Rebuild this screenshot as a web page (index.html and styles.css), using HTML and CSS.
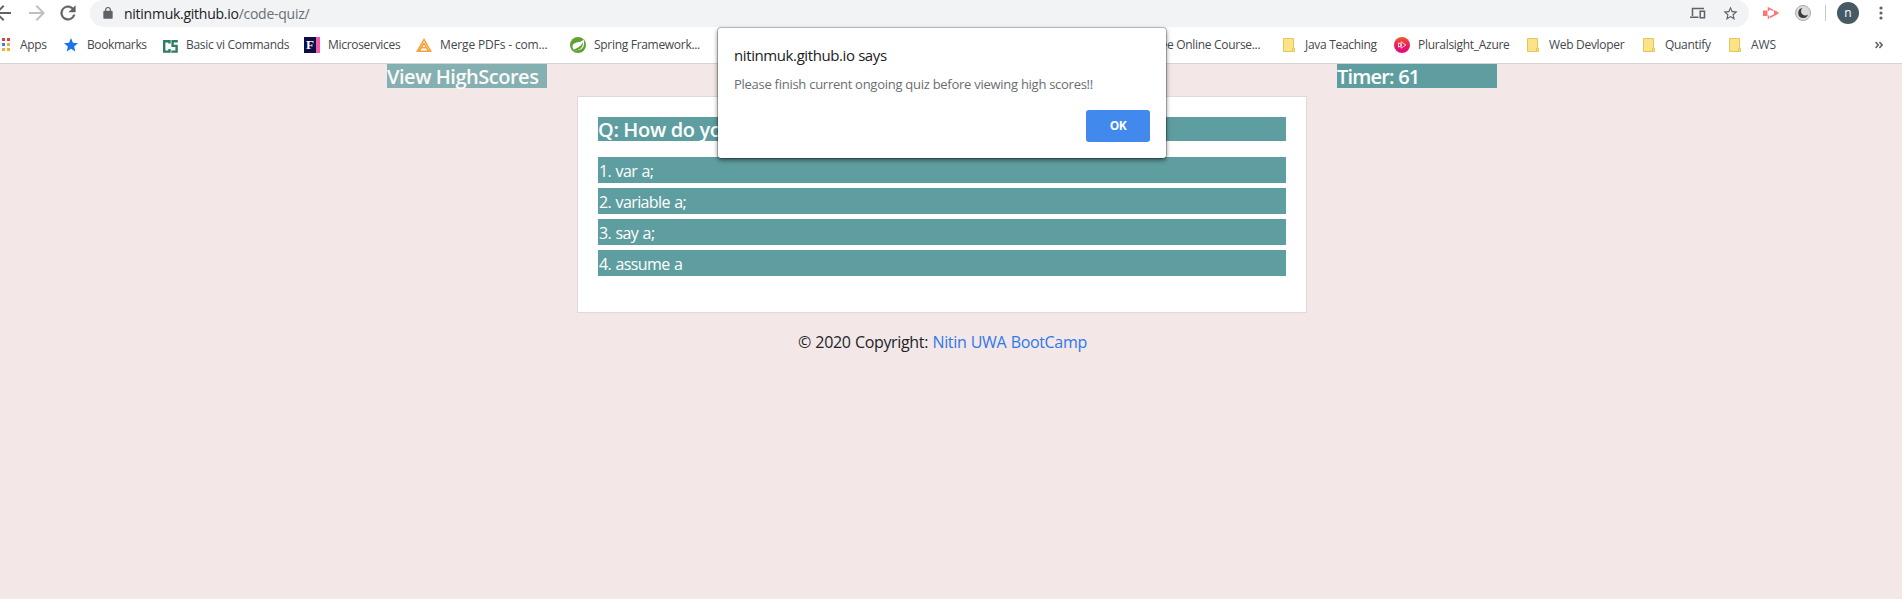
FILE: index.html
```html
<!DOCTYPE html>
<html lang="en">
<head>
<meta charset="utf-8">
<title>Code Quiz</title>
<link rel="stylesheet" href="styles.css">
</head>
<body>
<header class="browser">
  <div class="toolbar">
    <div class="nav">
      <svg width="24" height="24" viewBox="0 0 24 24"><path d="M20 11H7.830l5.590-5.590L12 4l-8 8 8 8 1.410-1.410L7.830 13H20z" fill="#5f6368"/></svg>
      <svg width="22" height="24" viewBox="1 0 22 24"><path d="M4 11h12.170l-5.590-5.590L12 4l8 8-8 8-1.410-1.410L16.170 13H4z" fill="#bdc0c3"/></svg>
      <svg class="reload" width="22" height="22" viewBox="0 0 24 24"><path d="M17.650 6.350A8 8 0 1 0 19.730 14h-2.080A6 6 0 1 1 12 6c1.660 0 3.140.69 4.220 1.780L13 11h7V4z" fill="#5f6368" stroke="#5f6368" stroke-width=".5"/></svg>
    </div>
    <div class="omnibox">
      <svg class="lock" width="14" height="14" viewBox="0 0 24 24"><path d="M18 8h-1V6.500a5 5 0 0 0-10 0V8H6a2 2 0 0 0-2 2v10a2 2 0 0 0 2 2h12a2 2 0 0 0 2-2V10a2 2 0 0 0-2-2zM9 8V6.500a3 3 0 0 1 6 0V8z" fill="#5f6368"/></svg>
      <span class="url">nitinmuk.github.io<span class="path">/code-quiz/</span></span>
      <svg class="devices" width="16" height="12" viewBox="0 0 16 12" fill="none" stroke="#5f6368" stroke-width="1.500"><path d="M2.500 9V1.500H14M0 10.200h8.500M10.200 4.200h4.300v6.600h-4.300z"/></svg>
      <svg class="fav" width="17" height="17" viewBox="0 0 24 24"><path d="M22 9.240l-7.190-.62L12 2 9.190 8.630 2 9.240l5.460 4.730L5.820 21 12 17.270 18.180 21l-1.630-7.030zM12 15.400l-3.760 2.270 1-4.280-3.320-2.880 4.380-.38L12 6.100l1.710 4.040 4.380.38-3.320 2.880 1 4.280z" fill="#5f6368"/></svg>
    </div>
    <div class="extensions">
      <svg class="ext-red" width="17" height="14" viewBox="0 0 17 14"><path d="M0 4.500h4.500v5.500H0z" fill="#f5797b"/><path d="M5.500 5V2l8.500 4.500M14 7.500L5.500 12V9.500" fill="none" stroke="#f5797b" stroke-width="1.600" stroke-dasharray="8 1"/><path d="M11 4.500L16.500 7 11 9.500z" fill="#f5797b"/></svg>
      <svg class="ext-moon" width="16" height="16" viewBox="0 0 16 16"><circle cx="8" cy="8" r="7.500" fill="#dcdcdc" stroke="#aaa"/><path d="M7.500 3A5 5 0 1 0 13 9.400 4 4 0 0 1 7.500 3z" fill="#3c3c3f"/></svg>
      <span class="divider"></span>
      <span class="avatar">n</span>
      <svg class="more" width="4" height="14" viewBox="0 0 4 14" fill="#5f6368"><circle cx="2" cy="2" r="1.600"/><circle cx="2" cy="7" r="1.600"/><circle cx="2" cy="12" r="1.600"/></svg>
    </div>
  </div>
  <nav class="bookmarks">
    <span class="bm"><svg width="16" height="16" viewBox="0 0 16 16"><path d="M1 1h3v3H1zM6 1h3v3H6zM11 1h3v3h-3z" fill="#d9453c"/><path d="M1 6h3v3H1z" fill="#32a050"/><path d="M6 6h3v3H6z" fill="#3b82e8"/><path d="M11 6h3v3h-3zM6 11h3v3H6zM11 11h3v3h-3z" fill="#eab02e"/></svg><span>Apps</span></span>
    <span class="bm"><svg class="star" width="14" height="14" viewBox="0 0 24 24"><path d="M12 18.300L19.400 23l-2-8.500L24 8.800l-8.700-.7L12 0 8.700 8.100 0 8.800l6.600 5.700-2 8.500z" fill="#1a73e8"/></svg><span class="tight">Bookmarks</span></span>
    <span class="bm"><svg width="16" height="16" viewBox="0 0 16 16" fill="none" stroke="#2f7d62" stroke-width="2.400"><path d="M7.500 6.500V4.200H2.200v10.400h5.300V12M15.800 4.200H10.600v4.700h4v5.700H9.300"/></svg><span>Basic vi Commands</span></span>
    <span class="bm"><span class="f-icon">F</span><span>Microservices</span></span>
    <span class="bm"><svg width="16" height="16" viewBox="0 0 16 16" fill="none" stroke="#f6a13a" stroke-width="1.500"><path d="M8 2.500L1.300 14.200h13.400zM8 6l-4.700 8M8 6l2.600 4.800H5.200M10.600 10.800l2 3.200"/></svg><span class="wide">Merge PDFs - com...</span></span>
    <span class="bm"><svg width="16" height="16" viewBox="0 0 16 16"><circle cx="8" cy="8" r="8" fill="#5fa135"/><path d="M13.500 2.300C12 5 9 5 6.500 5.500 3 6.300 1.700 9 3 11.500c.3.700 1 1.300 1.500 1.500 3 .7 7 .3 8.700-3 1.200-2.500 1-5.500.3-7.700z" fill="#fff"/><path d="M13 5c-1.500 3.500-4 5.500-9.500 7.700 3 .6 6.800.2 8.400-2.800C12.900 8.200 13 6.500 13 5z" fill="#5fa135"/></svg><span>Spring Framework...</span></span>
    <span class="bm course"><span>Free Online Course...</span></span>
    <span class="bm"><svg width="16" height="16" viewBox="0 0 16 16"><path d="M2.500 1.500h10v10h1v3h-11z" fill="#fde388" stroke="#e3c65c"/><path d="M11.500 14v-2.500h2" fill="none" stroke="#e3c65c"/></svg><span>Java Teaching</span></span>
    <span class="bm"><svg width="16" height="16" viewBox="0 0 16 16"><defs><linearGradient id="g" x1="0" y1="0" x2="0" y2="1"><stop offset="0" stop-color="#f05a28"/><stop offset=".6" stop-color="#e5195f"/><stop offset="1" stop-color="#e80a89"/></linearGradient></defs><circle cx="8" cy="8" r="8" fill="url(#g)"/><path d="M7 4.800v6.400L12 8zM4.500 5.800v4.400L8 8z" fill="none" stroke="#ffe3ec" stroke-width=".9"/></svg><span>Pluralsight_Azure</span></span>
    <span class="bm"><svg width="16" height="16" viewBox="0 0 16 16"><path d="M2.500 1.500h10v10h1v3h-11z" fill="#fde388" stroke="#e3c65c"/><path d="M11.500 14v-2.500h2" fill="none" stroke="#e3c65c"/></svg><span>Web Devloper</span></span>
    <span class="bm"><svg width="16" height="16" viewBox="0 0 16 16"><path d="M2.500 1.500h10v10h1v3h-11z" fill="#fde388" stroke="#e3c65c"/><path d="M11.500 14v-2.500h2" fill="none" stroke="#e3c65c"/></svg><span>Quantify</span></span>
    <span class="bm"><svg width="16" height="16" viewBox="0 0 16 16"><path d="M2.500 1.500h10v10h1v3h-11z" fill="#fde388" stroke="#e3c65c"/><path d="M11.500 14v-2.500h2" fill="none" stroke="#e3c65c"/></svg><span class="wide">AWS</span></span>
    <svg class="overflow" width="8" height="8" viewBox="0 0 8 8" fill="none" stroke="#5f6368" stroke-width="1.600"><path d="M.6 1l2.700 3L.6 7M4.400 1l2.700 3-2.700 3"/></svg>
  </nav>
</header>
<main class="page">
  <div class="status">
    <h5 class="tag scores">View HighScores</h5>
    <h5 class="tag timer">Timer: 61</h5>
  </div>
  <section class="card">
    <h5 class="question">Q: How do you</h5>
    <div class="option">1. var a;</div>
    <div class="option">2. variable a;</div>
    <div class="option">3. say a;</div>
    <div class="option">4. assume a</div>
  </section>
  <footer class="footer">© 2020 Copyright: <a class="link">Nitin UWA BootCamp</a></footer>
</main>
<div class="dialog">
  <div class="dialog-title">nitinmuk.github.io says</div>
  <div class="dialog-text">Please finish current ongoing quiz before viewing high scores!!</div>
  <span class="ok">OK</span>
</div>
</body>
</html>
```
FILE: styles.css
```css
* { box-sizing: border-box; }
body { margin: 0; height: 599px; overflow: hidden; background: #f3e7e7; font-family: "Open Sans", "Noto Sans", sans-serif; color: #212529; }
svg { display: block; flex: none; }
.browser { height: 64px; background: #fff; border-bottom: 1px solid #d5d3d6; }
.toolbar { display: flex; height: 27px; }
.nav { display: flex; align-items: center; width: 99px; margin-left: -9px; padding-bottom: 1px; gap: 11px; }
.reload { margin-left: -2px; }
.omnibox { display: flex; align-items: center; width: 1659px; height: 27px; padding: 0 10px 1px 11px; background: #f1f3f4; border-radius: 13px 13px 14px 14px; }
.url { margin-left: 9px; font-size: 14px; letter-spacing: -.26px; white-space: nowrap; color: #202124; }
.path { color: #6b6f74; }
.devices { margin-left: auto; margin-right: 16px; }
.extensions { display: flex; align-items: center; padding: 0 0 1px 14px; }
.ext-moon { margin-left: 15px; }
.divider { width: 1px; height: 16px; margin-left: 14px; background: #c6c8cb; }
.avatar { width: 22px; height: 22px; margin-left: 11px; border-radius: 50%; background: #455a64; color: #fff; font-size: 12px; line-height: 21px; text-align: center; }
.more { margin-left: 20px; }
.bookmarks { display: grid; grid-template-columns: 67px 99px 142px 112px 154px 580px 131px 113px 131px 116px 86px 147px 20px; align-items: center; height: 36px; margin-left: -4px; }
.bm { display: flex; align-items: center; gap: 8px; font-size: 12px; line-height: 16px; letter-spacing: -.3px; white-space: nowrap; color: #45484c; }
.tight { letter-spacing: -.4px; }
.wide { letter-spacing: -.14px; }
.star { margin: 0 1px; }
.f-icon { width: 16px; height: 16px; padding-left: 2px; background: linear-gradient(90deg, #0d0d48 12px, #f25ba5 12px); color: #fff; font: bold 13px/16px "Liberation Serif", serif; }
.overflow { margin-left: 1px; }
.status { display: flex; justify-content: space-between; width: 1110px; margin-left: 387px; }
.tag { width: 160px; height: 24px; margin: 0; background: #5f9ea0; color: #fff; font-size: 20px; font-weight: 600; line-height: 26px; letter-spacing: -.47px; white-space: nowrap; }
.scores { opacity: .75; }
.timer { letter-spacing: -.8px; }
.card { width: 730px; height: 217px; margin: 8px 0 0 577px; padding: 20px; background: #fff; border: 1px solid #e0d8d9; }
.question { height: 24px; margin: 0 0 16px; background: #5f9ea0; color: #fff; font-size: 20px; font-weight: 600; line-height: 26px; letter-spacing: -.35px; }
.option { height: 26px; margin-bottom: 5px; padding-left: 1px; background: #5f9ea0; color: #fff; font-size: 16px; line-height: 28px; letter-spacing: -.6px; word-spacing: .8px; }
.footer { margin: 17px 0 0 798px; font-size: 16px; line-height: 24px; letter-spacing: -.33px; word-spacing: .5px; white-space: nowrap; }
.link { color: #2f78ea; }
.dialog { position: absolute; left: 718px; top: 28px; width: 448px; height: 130px; padding: 16px; display: flex; flex-direction: column; background: #fff; border-radius: 3px; box-shadow: 0 0 0 1px rgba(0,0,0,.22), 0 2px 5px rgba(0,0,0,.55); white-space: nowrap; }
.dialog-title { height: 24px; font-size: 15px; line-height: 23px; letter-spacing: -.4px; color: #202124; }
.dialog-text { margin-top: 6px; font-size: 13px; line-height: 20px; letter-spacing: -.27px; color: #6a6e73; }
.ok { align-self: flex-end; width: 64px; height: 32px; margin-top: 16px; border-radius: 3px; background: #4189ec; color: #fff; font-size: 12px; font-weight: 700; line-height: 32px; letter-spacing: -.4px; text-align: center; }
```
